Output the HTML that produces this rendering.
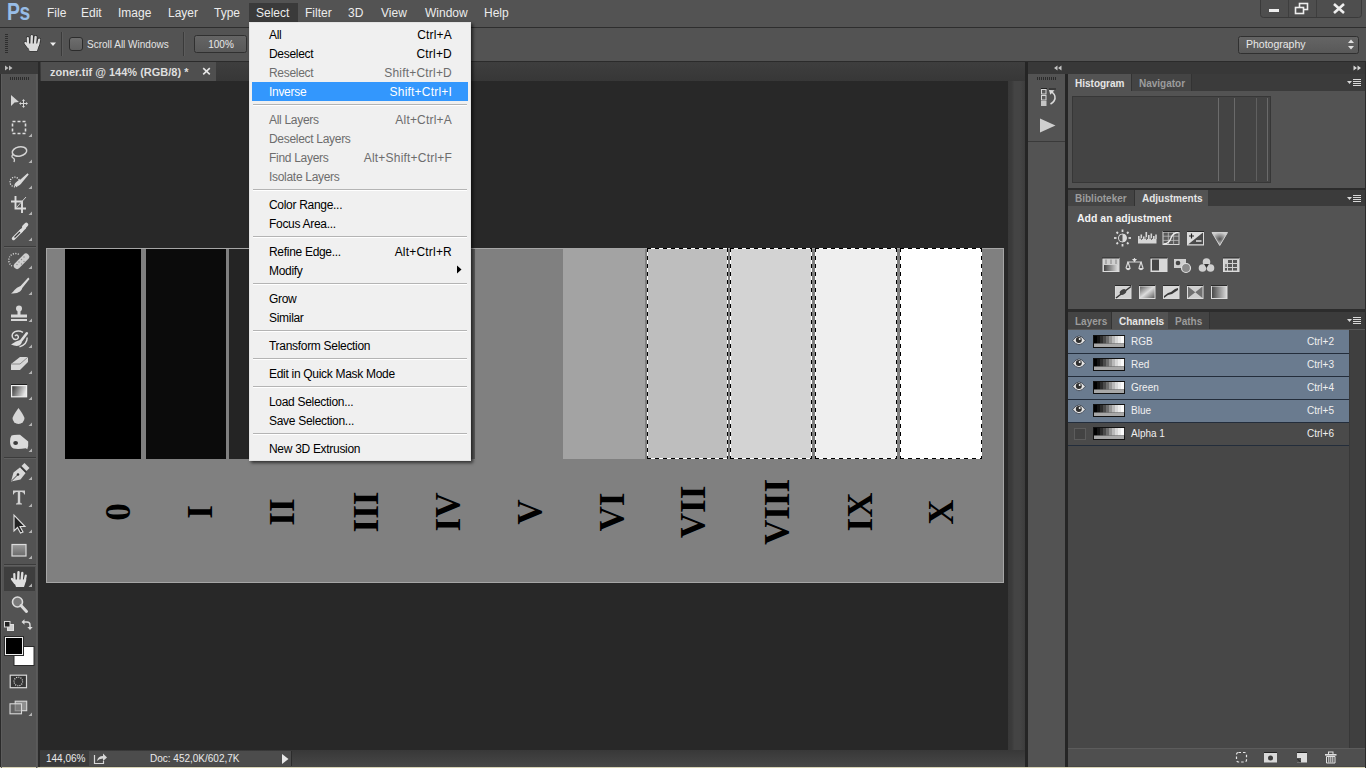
<!DOCTYPE html>
<html><head><meta charset="utf-8">
<style>
*{margin:0;padding:0;box-sizing:border-box}
html,body{width:1366px;height:768px;overflow:hidden;background:#535353;font-family:"Liberation Sans",sans-serif}
.a{position:absolute}
#menubar{left:0;top:0;width:1366px;height:27px;background:#535353}
.mi{position:absolute;top:6px;font-size:12px;color:#ececec;line-height:15px;white-space:nowrap;letter-spacing:0px}
#opt{left:0;top:27px;width:1366px;height:35px;background:#535353;border-top:1px solid #2e2e2e;border-bottom:1px solid #2b2b2b}
#tb{left:0;top:62px;width:38px;height:706px;background:#535353;border-left:1px solid #2a2a2a}
#tbhead{left:0;top:62px;width:38px;height:12px;background:#3a3a3a}
#tbsep{left:38px;top:62px;width:2px;height:706px;background:#2a2a2a}
#canvas{left:40px;top:62px;width:985px;height:706px;background:#282828}
#tabstrip{left:40px;top:62px;width:985px;height:19px;background:linear-gradient(#3e3e3e,#373737)}
#doctab{left:41px;top:62px;width:175px;height:19px;background:#4f4f4f}
#vscroll{left:1008px;top:81px;width:17px;height:669px;background:linear-gradient(90deg,#383838 0,#3b3b3b 22%,#444 38%,#444 72%,#3d3d3d 100%)}
#status{left:40px;top:750px;width:985px;height:17px;background:linear-gradient(#383838,#474747)}
#sep2{left:1025px;top:62px;width:3px;height:706px;background:#252525}
#icol{left:1028px;top:62px;width:37px;height:706px;background:#535353}
#sep3{left:1065px;top:62px;width:3px;height:706px;background:#252525}
#rp{left:1068px;top:62px;width:298px;height:706px;background:#474747}
#bottomline{left:0;top:767px;width:1366px;height:1px;background:#d9d4b6}
.t{position:absolute;white-space:nowrap}
/* document */
#doc{left:46px;top:248px;width:958px;height:335px;background:#808080;border:1px solid #a6a6a6}
.bar{position:absolute;top:0px;height:210px}
.ants{top:-1px;height:211px;background-image:linear-gradient(90deg,#000 50%,#fff 50%),linear-gradient(90deg,#000 50%,#fff 50%),linear-gradient(180deg,#000 50%,#fff 50%),linear-gradient(180deg,#000 50%,#fff 50%);background-size:8px 1px,8px 1px,1px 8px,1px 8px;background-position:0 0,0 100%,0 0,100% 0;background-repeat:repeat-x,repeat-x,repeat-y,repeat-y}
.num{position:absolute;font-family:"Liberation Serif",serif;font-weight:bold;font-size:35px;line-height:35px;color:#000;white-space:nowrap;transform:translate(-50%,-50%) rotate(-90deg)}
/* dropdown menu */
#menu{left:249px;top:22px;width:222px;height:439px;background:#f0f0f0;border:1px solid #e4e4e4;box-shadow:2px 2px 3px rgba(0,0,0,.6)}
.r{position:absolute;left:0;width:220px;height:19px;font-size:12px;line-height:19px;color:#000;letter-spacing:-0.3px}
.r .l{position:absolute;left:19px;top:1px}
.r .k{position:absolute;right:18px;top:1px;letter-spacing:0.2px}
.r.d{color:#6d6d6d}
.r.h{left:2px;width:216px;background:#3397fd;color:#fff}
.r.h .l{left:17px}.r.h .k{right:16px}
.sp{position:absolute;left:3px;width:214px;height:1px;background:#b4b4b4;border-bottom:1px solid #fff;box-sizing:content-box}
</style></head><body>
<div id="menubar" class="a"></div>
<div id="opt" class="a"></div>
<div id="tb" class="a"></div>
<div id="tbhead" class="a"></div>
<div id="tbsep" class="a"></div>
<div id="canvas" class="a"></div>
<div id="tabstrip" class="a"></div>
<div id="doctab" class="a"></div>
<div class="t" style="left:50px;top:66px;font-size:11px;font-weight:bold;color:#dedede;line-height:13px">zoner.tif @ 144% (RGB/8) *</div>
<svg class="a" style="left:200px;top:65px" width="12" height="12" viewBox="200 65 12 12"><path d="M203.2 68.2 L209.8 74.3 M209.8 68.2 L203.2 74.3" stroke="#e6e6e6" stroke-width="1.6"/></svg>
<div id="vscroll" class="a"></div>
<div id="status" class="a"></div>
<div id="sep2" class="a"></div>
<div id="icol" class="a"></div>
<div id="sep3" class="a"></div>
<div id="rp" class="a"></div>
<div id="bottomline" class="a"></div>


<!-- toolbar icons -->
<svg class="a" style="left:0;top:0" width="40" height="768" viewBox="0 0 40 768">
 <rect x="1" y="74" width="1" height="694" fill="#5c5c5c"/>
 <rect x="36" y="74" width="1.5" height="694" fill="#5b5b5b"/>
 <path d="M5 65.5 L8.5 68 L5 70.5Z M9 65.5 L12.5 68 L9 70.5Z" fill="#bdbdbd"/>
 <g fill="#2b2b2b"><rect x="10" y="77" width="1" height="3"/><rect x="12" y="77" width="1" height="3"/><rect x="14" y="77" width="1" height="3"/><rect x="16" y="77" width="1" height="3"/><rect x="18" y="77" width="1" height="3"/><rect x="20" y="77" width="1" height="3"/><rect x="22" y="77" width="1" height="3"/><rect x="24" y="77" width="1" height="3"/><rect x="26" y="77" width="1" height="3"/><rect x="28" y="77" width="1" height="3"/></g>
 <g fill="#3b3b3b"><rect x="4" y="246" width="32" height="1"/><rect x="4" y="457" width="32" height="1"/><rect x="4" y="564" width="32" height="1"/></g>
 <g fill="#5f5f5f"><rect x="4" y="247" width="32" height="1"/><rect x="4" y="458" width="32" height="1"/><rect x="4" y="565" width="32" height="1"/></g>
 <!-- selected hand bg -->
 <rect x="4" y="567" width="31" height="24" fill="#3e3e3e"/>
 <!-- flyout triangles -->
 <g fill="#b4b4b4">
  <path d="M28.5 137h3.5v-3.5z"/><path d="M28.5 163h3.5v-3.5z"/><path d="M28.5 189h3.5v-3.5z"/><path d="M28.5 215h3.5v-3.5z"/><path d="M28.5 241h3.5v-3.5z"/>
  <path d="M28.5 269h3.5v-3.5z"/><path d="M28.5 295h3.5v-3.5z"/><path d="M28.5 322h3.5v-3.5z"/><path d="M28.5 348h3.5v-3.5z"/><path d="M28.5 374h3.5v-3.5z"/><path d="M28.5 400h3.5v-3.5z"/><path d="M28.5 426h3.5v-3.5z"/><path d="M28.5 452h3.5v-3.5z"/>
  <path d="M28.5 480h3.5v-3.5z"/><path d="M28.5 507h3.5v-3.5z"/><path d="M28.5 533h3.5v-3.5z"/><path d="M28.5 559h3.5v-3.5z"/><path d="M28.5 587h3.5v-3.5z"/><path d="M28.5 716h3.5v-3.5z"/>
 </g>
 <g fill="#d6d6d6" stroke="none">
  <!-- move -->
  <path d="M11 95 L19 102 L14.5 102.5 L11 106 Z"/>
  <path d="M23.5 99 L25 101 H24 V103 H26 V102 L28 103.5 L26 105 V104 H24 V106 H25 L23.5 108 L22 106 H23 V104 H21 V105 L19 103.5 L21 102 V103 H23 V101 H22 Z"/>
 </g>
 <!-- marquee -->
 <rect x="12.5" y="121.5" width="13" height="12" fill="none" stroke="#dedede" stroke-width="1.6" stroke-dasharray="3 2"/>
 <!-- lasso -->
 <ellipse cx="19.5" cy="151.5" rx="7.3" ry="4.6" fill="none" stroke="#d4d4d4" stroke-width="1.5" transform="rotate(-12 19.5 151.5)"/>
 <path d="M13.5 154 Q11 156 12.5 157.5 Q14.5 158.5 14.5 160 L14 162" fill="none" stroke="#d4d4d4" stroke-width="1.3"/>
 <!-- quick select -->
 <circle cx="14.8" cy="182" r="4.8" fill="none" stroke="#e8e8e8" stroke-width="1.3" stroke-dasharray="1.1 1.3"/>
 <path d="M27.5 173.3 L20.5 179.5 Q15.5 181.5 14.3 185 Q14 186.5 16 186.2 Q20.5 185.5 22 182.5 L28.7 174.6Z" fill="#dadada"/>
 <!-- crop -->
 <path d="M15.5 196 V208.5 H26 M11 201.5 H22 V213" fill="none" stroke="#dcdcdc" stroke-width="1.9"/>
 <path d="M16.5 207.5 L26 197" stroke="#cfcfcf" stroke-width="1"/>
 <!-- eyedropper -->
 <path d="M13.5 238.5 L21.5 230.5" stroke="#dcdcdc" stroke-width="3.4" stroke-linecap="round"/>
 <path d="M14.5 237.5 L21 231" stroke="#3a3a3a" stroke-width="1.2"/>
 <rect x="19" y="228" width="7" height="3.2" fill="#dedede" transform="rotate(-45 22.5 229.6)"/>
 <path d="M24 227 L26.3 224.7" stroke="#dcdcdc" stroke-width="4" stroke-linecap="round"/>
 <!-- healing -->
 <path d="M12 266 A6.5 6.5 0 0 1 19 254.5" fill="none" stroke="#e6e6e6" stroke-width="1.3" stroke-dasharray="1 1.4"/>
 <rect x="12" y="258" width="19" height="6.5" rx="3.2" fill="#cfcfcf" transform="rotate(-45 21.5 261.25)"/>
 <g fill="#8a8a8a"><circle cx="19" cy="262" r=".7"/><circle cx="21.5" cy="259.5" r=".7"/><circle cx="24" cy="257" r=".7"/><circle cx="17" cy="264.5" r=".7"/><circle cx="21.5" cy="264" r=".7"/><circle cx="24" cy="261.5" r=".7"/></g>
 <!-- brush -->
 <path d="M28.3 277.5 L20.5 286 Q16.5 287.5 14.5 290 Q13 292 11 293.5 Q17 294 20 291.5 Q22 289.5 22.3 288 L29.5 279Z" fill="#dadada"/>
 <!-- stamp -->
 <circle cx="19" cy="308.5" r="3" fill="#d8d8d8"/><rect x="17.5" y="310" width="3" height="5" fill="#d8d8d8"/><rect x="11" y="314.5" width="16" height="3" fill="#d8d8d8"/><rect x="11" y="319" width="16" height="2" fill="#d8d8d8"/>
 <!-- history brush -->
 <path d="M23 332.3 Q19 330.2 15 331.6 Q11.3 333.6 12.4 337.2 Q13.8 340.2 17 339.2 Q19.3 337.8 17.8 335.6 Q16.3 334.3 15 336" fill="none" stroke="#dedede" stroke-width="1.4"/>
 <path d="M26.8 333.3 L21.3 340.5" stroke="#dedede" stroke-width="2.6" stroke-linecap="round"/>
 <path d="M20.8 339.8 Q16 341 11 344.6 Q15.5 346.6 19.3 345.6 Q21.3 344.2 22 342Z" fill="#dedede"/>
 <path d="M27.2 337.5 Q27.2 344.5 19.5 346.8" fill="none" stroke="#dedede" stroke-width="1.4"/>
 <!-- eraser -->
 <path d="M11 364 L20 357 H28 V362 L20 370 H11Z" fill="#d8d8d8"/><path d="M11 364 H20 L28 357" stroke="#7a7a7a" stroke-width=".8" fill="none"/>
 <!-- gradient -->
 <defs><linearGradient id="gr" x1="0" y1="0" x2="1" y2="1"><stop offset="0" stop-color="#3a3a3a"/><stop offset="1" stop-color="#e8e8e8"/></linearGradient>
 <linearGradient id="gr2" x1="0" y1="0" x2="0" y2="1"><stop offset="0" stop-color="#9a9a9a"/><stop offset="1" stop-color="#6a6a6a"/></linearGradient></defs>
 <linearGradient id="gr3" x1="0" y1="0" x2="1" y2="0.3"><stop offset="0" stop-color="#2e2e2e"/><stop offset="1" stop-color="#e6e6e6"/></linearGradient>
 <rect x="11.6" y="385.6" width="15" height="11.2" fill="url(#gr3)" stroke="#f0f0f0" stroke-width="1.2"/><rect x="11" y="384" width="16" height="1" fill="#1e1e1e"/>
 <!-- blur -->
 <path d="M18.5 408 Q14 414 12.5 418 A6 6 0 0 0 24.5 418 Q23 414 18.5 408Z" fill="#d6d6d6"/>
 <!-- dodge/smudge -->
 <path d="M11.5 435.5 Q13.5 434.6 20 434.8 L28.2 441.5 Q28.6 446 27.3 449.3 L25.8 448.3 Q18 449.6 13.5 448.6 Q10 446.8 10 441.5 Q10 437.5 11.5 435.5Z" fill="#dadada"/>
 <ellipse cx="15.6" cy="443" rx="2.4" ry="2" fill="#3c3c3c"/>
 <!-- pen -->
 <path d="M11 481.5 L13.5 472.5 L20.5 467 L26 472.5 L20.5 479.5 Z" fill="#d8d8d8"/>
 <path d="M21.5 466 L24.5 463 L29.5 468 L26.5 471Z" fill="#d8d8d8"/>
 <path d="M20.5 467 L26 472.5" stroke="#333" stroke-width="1.1"/>
 <path d="M11.5 481 L17.5 475" stroke="#444" stroke-width="1"/><circle cx="18" cy="474.5" r="1.3" fill="#333"/>
 <!-- type -->
 <path d="M13 490.5 H25 V494.5 H24.3 Q24 492 21.5 492 H20.2 V502.2 Q20.2 503.6 22 503.6 V504.5 H16 V503.6 Q17.8 503.6 17.8 502.2 V492 H16.5 Q14 492 13.7 494.5 H13Z" fill="#d2d2d2"/>
 <!-- path select -->
 <path d="M14 515 V531 L17.5 527.5 L20.5 533 L23 532 L20 526.5 H25 Z" fill="#222" stroke="#e0e0e0" stroke-width="1.1"/>
 <!-- rect -->
 <rect x="12" y="544.5" width="14" height="11.5" fill="url(#gr2)" stroke="#dcdcdc" stroke-width="1.2"/>
 <!-- hand -->
 <g stroke="#dedede" stroke-linecap="round"><line x1="14.5" y1="580" x2="14.3" y2="574" stroke-width="2.2"/><line x1="18.2" y1="580" x2="18.5" y2="572.3" stroke-width="2.4"/><line x1="21.7" y1="580" x2="22.3" y2="573" stroke-width="2.4"/><line x1="24.6" y1="581" x2="25.8" y2="575.5" stroke-width="2.2"/><line x1="15" y1="583" x2="12" y2="579" stroke-width="2.3"/></g>
 <path d="M13.5 579.5 H26.5 L24 587 H16Z" fill="#dedede"/>
 <!-- zoom -->
 <circle cx="17.5" cy="602" r="5" fill="#7a7a7a" stroke="#dcdcdc" stroke-width="1.6"/><path d="M21 605.5 L26.5 611.5" stroke="#dcdcdc" stroke-width="3" stroke-linecap="round"/>
 <!-- default colors -->
 <rect x="7.5" y="624.5" width="6" height="6" fill="#cfcfcf" stroke="#e0e0e0" stroke-width="1"/><rect x="4.5" y="621.5" width="5.5" height="5.5" fill="#222" stroke="#d8d8d8" stroke-width="1"/>
 <!-- swap -->
 <path d="M23.5 622 H27 Q30 622 30 625 V628" fill="none" stroke="#dcdcdc" stroke-width="1.4"/><path d="M21.5 622 L24.5 619.3 V624.7Z M27.3 627 H32.7 L30 630Z" fill="#dcdcdc"/>
 <!-- fg bg -->
 <rect x="14" y="646.5" width="20" height="19" fill="#fff" stroke="#2a2a2a" stroke-width="1"/>
 <rect x="4.5" y="636.5" width="19" height="19" fill="#000" stroke="#2a2a2a" stroke-width="1"/>
 <rect x="5.5" y="637.5" width="17" height="17" fill="#000" stroke="#f0f0f0" stroke-width="1"/>
 <!-- quick mask -->
 <rect x="10.2" y="675.2" width="16.3" height="12.5" fill="#353535" stroke="#d8d8d8" stroke-width="1.2"/><circle cx="18.3" cy="681.5" r="4.3" fill="none" stroke="#f0f0f0" stroke-width="1.1" stroke-dasharray="1 1.2"/>
 <!-- screen mode -->
 <rect x="15.2" y="701.2" width="11.5" height="9.5" fill="#8e8e8e" stroke="#d8d8d8" stroke-width="1.1"/>
 <rect x="10" y="703.8" width="11.5" height="10" fill="#6e6e6e" fill-opacity=".6" stroke="#d8d8d8" stroke-width="1.1"/>
</svg>


<!-- options bar -->
<svg class="a" style="left:0;top:27px" width="1366" height="35" viewBox="0 27 1366 35">
 <g fill="#2e2e2e"><rect x="5" y="34" width="3" height="1"/><rect x="5" y="36" width="3" height="1"/><rect x="5" y="38" width="3" height="1"/><rect x="5" y="40" width="3" height="1"/><rect x="5" y="42" width="3" height="1"/><rect x="5" y="44" width="3" height="1"/><rect x="5" y="46" width="3" height="1"/><rect x="5" y="48" width="3" height="1"/><rect x="5" y="50" width="3" height="1"/><rect x="5" y="52" width="3" height="1"/></g>
 <!-- hand -->
 <g stroke="#2a2a2a" stroke-linecap="round"><line x1="28" y1="44" x2="27.8" y2="38" stroke-width="3.6"/><line x1="31.5" y1="44" x2="31.8" y2="36.3" stroke-width="3.8"/><line x1="35" y1="44" x2="35.6" y2="37" stroke-width="3.8"/><line x1="38" y1="45" x2="39.2" y2="39.5" stroke-width="3.6"/><line x1="28.5" y1="47" x2="25.5" y2="43" stroke-width="3.7"/></g>
 <path d="M27 43 H40 L37.5 51.5 H29.5Z" fill="#2a2a2a"/>
 <g stroke="#dcdcdc" stroke-linecap="round"><line x1="28" y1="44" x2="27.8" y2="38" stroke-width="2.2"/><line x1="31.5" y1="44" x2="31.8" y2="36.3" stroke-width="2.4"/><line x1="35" y1="44" x2="35.6" y2="37" stroke-width="2.4"/><line x1="38" y1="45" x2="39.2" y2="39.5" stroke-width="2.2"/><line x1="28.5" y1="47" x2="25.5" y2="43" stroke-width="2.3"/></g>
 <path d="M27 43.5 H39.5 L37 51 H29.5Z" fill="#dcdcdc"/>
 <path d="M50 42.5 H56 L53 46Z" fill="#f0f0f0"/>
 <rect x="61" y="32" width="1" height="24" fill="#3a3a3a"/><rect x="62" y="32" width="1" height="24" fill="#5c5c5c"/>
 <defs><linearGradient id="cb" x1="0" y1="0" x2="0" y2="1"><stop offset="0" stop-color="#6e6e6e"/><stop offset="1" stop-color="#5e5e5e"/></linearGradient>
 <linearGradient id="btn" x1="0" y1="0" x2="0" y2="1"><stop offset="0" stop-color="#656565"/><stop offset="1" stop-color="#585858"/></linearGradient></defs>
 <rect x="69.5" y="37.5" width="13" height="13" rx="2.5" fill="url(#cb)" stroke="#2c2c2c"/>
 <rect x="183" y="32" width="1" height="24" fill="#3a3a3a"/><rect x="184" y="32" width="1" height="24" fill="#5c5c5c"/>
 <rect x="194.5" y="35.5" width="52" height="17" rx="2" fill="url(#btn)" stroke="#303030"/>
 <rect x="1238.5" y="36.5" width="120" height="17" rx="2" fill="url(#btn)" stroke="#303030"/>
 <path d="M1348 43 L1351 39.5 L1354 43Z M1348 46 L1351 49.5 L1354 46Z" fill="#e0e0e0"/>
</svg>
<div class="t" style="left:87px;top:39px;font-size:10px;line-height:12px;color:#e4e4e4">Scroll All Windows</div>
<div class="t" style="left:195px;top:39px;width:52px;text-align:center;font-size:10px;line-height:12px;color:#e8e8e8">100%</div>
<div class="t" style="left:1246px;top:38px;font-size:10.5px;line-height:13px;color:#e8e8e8">Photography</div>
<!-- window buttons -->
<svg class="a" style="left:1258px;top:0" width="108" height="20" viewBox="1258 0 108 20">
 <path d="M1260.5 0 V14.5 Q1260.5 17.5 1263.5 17.5 H1358.5 Q1361.5 17.5 1361.5 14.5 V0" fill="#4e4e4e" stroke="#3a3a3a"/>
 <rect x="1288" y="0" width="1" height="17" fill="#3e3e3e"/><rect x="1316" y="0" width="1" height="17" fill="#3e3e3e"/>
 <rect x="1269" y="9" width="10" height="3" fill="#eeeeee"/>
 <rect x="1299.5" y="3.5" width="8" height="6" fill="none" stroke="#eee" stroke-width="1.6"/><rect x="1295.5" y="7.5" width="8" height="6" fill="#4e4e4e" stroke="#eee" stroke-width="1.6"/>
 <path d="M1334 4 L1344 13 M1344 4 L1334 13" stroke="#eee" stroke-width="2.6"/>
</svg>
<!-- Ps logo -->
<div class="t" style="left:7px;top:1px;font-size:23px;line-height:23px;font-weight:bold;color:#98bde6;letter-spacing:-0.5px;transform:scaleX(0.84);transform-origin:0 0">Ps</div>


<!-- right side -->
<div class="a" style="left:1028px;top:62px;width:338px;height:12px;background:#383838"></div>
<div class="a" style="left:1365px;top:62px;width:1px;height:706px;background:#2c2c2c"></div>
<svg class="a" style="left:1028px;top:62px" width="37" height="706" viewBox="1028 62 37 706">
 <path d="M1057.5 65.5 L1054 68 L1057.5 70.5Z M1061.5 65.5 L1058 68 L1061.5 70.5Z" fill="#c4c4c4"/>
 <g fill="#2b2b2b"><rect x="1037" y="77" width="1" height="3"/><rect x="1039" y="77" width="1" height="3"/><rect x="1041" y="77" width="1" height="3"/><rect x="1043" y="77" width="1" height="3"/><rect x="1045" y="77" width="1" height="3"/><rect x="1047" y="77" width="1" height="3"/><rect x="1049" y="77" width="1" height="3"/><rect x="1051" y="77" width="1" height="3"/><rect x="1053" y="77" width="1" height="3"/><rect x="1055" y="77" width="1" height="3"/></g>
 <rect x="1041" y="88" width="6" height="1" fill="#222"/>
 <rect x="1041.5" y="89.5" width="4.5" height="4.5" fill="#5a5a5a" stroke="#d8d8d8"/>
 <rect x="1041.5" y="95.5" width="4.5" height="4.5" fill="#5a5a5a" stroke="#d8d8d8"/>
 <rect x="1041" y="101" width="5.5" height="5" fill="#c4c4c4"/>
 <rect x="1049" y="88.5" width="7" height="1" fill="#222"/>
 <path d="M1049 90 L1054.5 90.3 L1050.3 94.8Z" fill="#dadada"/>
 <path d="M1052 92 Q1057 96.5 1054 101 Q1052.8 102.8 1050.5 104" fill="none" stroke="#dadada" stroke-width="1.6"/>
 <path d="M1040 118.5 L1055.5 125.5 L1040 132.5Z" fill="#cfcfcf"/>
 <rect x="1028" y="141" width="37" height="1" fill="#3a3a3a"/>
</svg>
<!-- panel 1 -->
<div class="a" style="left:1068px;top:74px;width:297px;height:17px;background:#3b3b3b"></div>
<div class="a" style="left:1068px;top:74px;width:63px;height:17px;background:#535353"></div>
<div class="a" style="left:1131px;top:74px;width:61px;height:17px;background:#444444;border-left:1px solid #333;border-right:1px solid #333"></div>
<div class="t" style="left:1075px;top:78px;font-size:10px;font-weight:bold;line-height:12px;color:#e6e6e6">Histogram</div>
<div class="t" style="left:1139px;top:78px;font-size:10px;font-weight:bold;line-height:12px;color:#9c9c9c">Navigator</div>
<div class="a" style="left:1068px;top:91px;width:297px;height:97px;background:#535353"></div>
<div class="a" style="left:1072px;top:96px;width:199px;height:87px;background:#444444;border:1px solid #373737"></div>
<div class="a" style="left:1218px;top:98px;width:1px;height:83px;background:#6c6c6c"></div>
<div class="a" style="left:1234px;top:98px;width:1px;height:83px;background:#6a6a6a"></div>
<div class="a" style="left:1256px;top:98px;width:1px;height:83px;background:#606060"></div>
<div class="a" style="left:1267px;top:98px;width:1px;height:83px;background:#6a6a6a"></div>
<div class="a" style="left:1068px;top:188px;width:297px;height:2px;background:#2c2c2c"></div>
<!-- panel 2 -->
<div class="a" style="left:1068px;top:190px;width:297px;height:16px;background:#3b3b3b"></div>
<div class="a" style="left:1068px;top:190px;width:67px;height:16px;background:#444444;border-right:1px solid #333"></div>
<div class="a" style="left:1135px;top:190px;width:73px;height:16px;background:#535353"></div>
<div class="t" style="left:1075px;top:193px;font-size:10px;font-weight:bold;line-height:12px;color:#9c9c9c">Biblioteker</div>
<div class="t" style="left:1142px;top:193px;font-size:10px;font-weight:bold;line-height:12px;color:#e6e6e6">Adjustments</div>
<div class="a" style="left:1068px;top:206px;width:297px;height:103px;background:#535353"></div>
<div class="t" style="left:1077px;top:212px;font-size:10.5px;font-weight:bold;line-height:12px;color:#f2f2f2">Add an adjustment</div>
<div class="a" style="left:1068px;top:309px;width:297px;height:3px;background:#2c2c2c"></div>
<!-- panel 3 -->
<div class="a" style="left:1068px;top:312px;width:297px;height:17px;background:#3b3b3b"></div>
<div class="a" style="left:1068px;top:312px;width:44px;height:17px;background:#444444;border-right:1px solid #333"></div>
<div class="a" style="left:1112px;top:312px;width:56px;height:17px;background:#535353"></div>
<div class="a" style="left:1168px;top:312px;width:42px;height:17px;background:#444444;border-right:1px solid #333"></div>
<div class="t" style="left:1075px;top:316px;font-size:10px;font-weight:bold;line-height:12px;color:#9c9c9c">Layers</div>
<div class="t" style="left:1119px;top:316px;font-size:10px;font-weight:bold;line-height:12px;color:#e6e6e6">Channels</div>
<div class="t" style="left:1175px;top:316px;font-size:10px;font-weight:bold;line-height:12px;color:#9c9c9c">Paths</div>
<div class="a" style="left:1068px;top:329px;width:297px;height:1px;background:#585858"></div>
<div class="a" style="left:1349px;top:330px;width:16px;height:418px;background:#3f3f3f;border-left:1px solid #383838"></div>
<div class="a" style="left:1068px;top:748px;width:297px;height:18px;background:#4f4f4f;border-top:1px solid #5c5c5c"></div>
<!-- menu icons -->
<svg class="a" style="left:1340px;top:62px" width="25" height="270" viewBox="1340 62 25 270">
 <g fill="#d8d8d8">
  <path d="M1347 81 H1352 L1349.5 84Z"/><rect x="1353" y="79" width="8" height="1"/><rect x="1353" y="81" width="8" height="1"/><rect x="1353" y="83" width="8" height="1"/><rect x="1353" y="85" width="8" height="1"/>
  <path d="M1347 197 H1352 L1349.5 200Z"/><rect x="1353" y="195" width="8" height="1"/><rect x="1353" y="197" width="8" height="1"/><rect x="1353" y="199" width="8" height="1"/><rect x="1353" y="201" width="8" height="1"/>
  <path d="M1347 319 H1352 L1349.5 322Z"/><rect x="1353" y="317" width="8" height="1"/><rect x="1353" y="319" width="8" height="1"/><rect x="1353" y="321" width="8" height="1"/><rect x="1353" y="323" width="8" height="1"/>
  <path d="M1353.5 65.5 L1357 68 L1353.5 70.5Z M1357.5 65.5 L1361 68 L1357.5 70.5Z"/>
 </g>
</svg>

<!-- channel rows -->
<div class="a" style="left:1068px;top:330px;width:281px;height:1px;background:#6a7b8f"></div>
<div class="a" style="left:1068px;top:331px;width:281px;height:22px;background:#6a7b8f"><svg width="14" height="11" viewBox="0 0 14 11" style="position:absolute;left:4px;top:4px"><path d="M0.8 5.5 Q7 -3.6 13.2 5.5 Q7 14 0.8 5.5Z" fill="#e8e8e8" stroke="#3c4450" stroke-width=".9"/><circle cx="6.8" cy="5" r="3" fill="#2e2e2e"/><circle cx="7.7" cy="3.9" r="1" fill="#f4f4f4"/></svg><svg width="32" height="13" viewBox="0 0 32 13" style="position:absolute;left:25px;top:4px"><rect x="0" y="0" width="32" height="13" fill="#111"/><rect x="1.0" y="1" width="3.1" height="7.5" fill="#000000"/><rect x="4.0" y="1" width="3.1" height="7.5" fill="#141414"/><rect x="7.0" y="1" width="3.1" height="7.5" fill="#2d2d2d"/><rect x="10.0" y="1" width="3.1" height="7.5" fill="#4b4b4b"/><rect x="13.0" y="1" width="3.1" height="7.5" fill="#6e6e6e"/><rect x="16.0" y="1" width="3.1" height="7.5" fill="#969696"/><rect x="19.0" y="1" width="3.1" height="7.5" fill="#b9b9b9"/><rect x="22.0" y="1" width="3.1" height="7.5" fill="#d7d7d7"/><rect x="25.0" y="1" width="3.1" height="7.5" fill="#ebebeb"/><rect x="28.0" y="1" width="3.1" height="7.5" fill="#fafafa"/><rect x="1" y="8.5" width="30" height="3.5" fill="#a8a8a8"/></svg><div class="t" style="left:63px;top:5px;font-size:10px;line-height:12px;color:#f0f0f0">RGB</div><div class="t" style="left:239px;top:5px;font-size:10px;line-height:12px;color:#f0f0f0">Ctrl+2</div></div>
<div class="a" style="left:1068px;top:353px;width:281px;height:1px;background:#232d3b"></div>
<div class="a" style="left:1068px;top:354px;width:281px;height:22px;background:#6a7b8f"><svg width="14" height="11" viewBox="0 0 14 11" style="position:absolute;left:4px;top:4px"><path d="M0.8 5.5 Q7 -3.6 13.2 5.5 Q7 14 0.8 5.5Z" fill="#e8e8e8" stroke="#3c4450" stroke-width=".9"/><circle cx="6.8" cy="5" r="3" fill="#2e2e2e"/><circle cx="7.7" cy="3.9" r="1" fill="#f4f4f4"/></svg><svg width="32" height="13" viewBox="0 0 32 13" style="position:absolute;left:25px;top:4px"><rect x="0" y="0" width="32" height="13" fill="#111"/><rect x="1.0" y="1" width="3.1" height="7.5" fill="#000000"/><rect x="4.0" y="1" width="3.1" height="7.5" fill="#141414"/><rect x="7.0" y="1" width="3.1" height="7.5" fill="#2d2d2d"/><rect x="10.0" y="1" width="3.1" height="7.5" fill="#4b4b4b"/><rect x="13.0" y="1" width="3.1" height="7.5" fill="#6e6e6e"/><rect x="16.0" y="1" width="3.1" height="7.5" fill="#969696"/><rect x="19.0" y="1" width="3.1" height="7.5" fill="#b9b9b9"/><rect x="22.0" y="1" width="3.1" height="7.5" fill="#d7d7d7"/><rect x="25.0" y="1" width="3.1" height="7.5" fill="#ebebeb"/><rect x="28.0" y="1" width="3.1" height="7.5" fill="#fafafa"/><rect x="1" y="8.5" width="30" height="3.5" fill="#a8a8a8"/></svg><div class="t" style="left:63px;top:5px;font-size:10px;line-height:12px;color:#f0f0f0">Red</div><div class="t" style="left:239px;top:5px;font-size:10px;line-height:12px;color:#f0f0f0">Ctrl+3</div></div>
<div class="a" style="left:1068px;top:376px;width:281px;height:1px;background:#232d3b"></div>
<div class="a" style="left:1068px;top:377px;width:281px;height:22px;background:#6a7b8f"><svg width="14" height="11" viewBox="0 0 14 11" style="position:absolute;left:4px;top:4px"><path d="M0.8 5.5 Q7 -3.6 13.2 5.5 Q7 14 0.8 5.5Z" fill="#e8e8e8" stroke="#3c4450" stroke-width=".9"/><circle cx="6.8" cy="5" r="3" fill="#2e2e2e"/><circle cx="7.7" cy="3.9" r="1" fill="#f4f4f4"/></svg><svg width="32" height="13" viewBox="0 0 32 13" style="position:absolute;left:25px;top:4px"><rect x="0" y="0" width="32" height="13" fill="#111"/><rect x="1.0" y="1" width="3.1" height="7.5" fill="#000000"/><rect x="4.0" y="1" width="3.1" height="7.5" fill="#141414"/><rect x="7.0" y="1" width="3.1" height="7.5" fill="#2d2d2d"/><rect x="10.0" y="1" width="3.1" height="7.5" fill="#4b4b4b"/><rect x="13.0" y="1" width="3.1" height="7.5" fill="#6e6e6e"/><rect x="16.0" y="1" width="3.1" height="7.5" fill="#969696"/><rect x="19.0" y="1" width="3.1" height="7.5" fill="#b9b9b9"/><rect x="22.0" y="1" width="3.1" height="7.5" fill="#d7d7d7"/><rect x="25.0" y="1" width="3.1" height="7.5" fill="#ebebeb"/><rect x="28.0" y="1" width="3.1" height="7.5" fill="#fafafa"/><rect x="1" y="8.5" width="30" height="3.5" fill="#a8a8a8"/></svg><div class="t" style="left:63px;top:5px;font-size:10px;line-height:12px;color:#f0f0f0">Green</div><div class="t" style="left:239px;top:5px;font-size:10px;line-height:12px;color:#f0f0f0">Ctrl+4</div></div>
<div class="a" style="left:1068px;top:399px;width:281px;height:1px;background:#232d3b"></div>
<div class="a" style="left:1068px;top:400px;width:281px;height:22px;background:#6a7b8f"><svg width="14" height="11" viewBox="0 0 14 11" style="position:absolute;left:4px;top:4px"><path d="M0.8 5.5 Q7 -3.6 13.2 5.5 Q7 14 0.8 5.5Z" fill="#e8e8e8" stroke="#3c4450" stroke-width=".9"/><circle cx="6.8" cy="5" r="3" fill="#2e2e2e"/><circle cx="7.7" cy="3.9" r="1" fill="#f4f4f4"/></svg><svg width="32" height="13" viewBox="0 0 32 13" style="position:absolute;left:25px;top:4px"><rect x="0" y="0" width="32" height="13" fill="#111"/><rect x="1.0" y="1" width="3.1" height="7.5" fill="#000000"/><rect x="4.0" y="1" width="3.1" height="7.5" fill="#141414"/><rect x="7.0" y="1" width="3.1" height="7.5" fill="#2d2d2d"/><rect x="10.0" y="1" width="3.1" height="7.5" fill="#4b4b4b"/><rect x="13.0" y="1" width="3.1" height="7.5" fill="#6e6e6e"/><rect x="16.0" y="1" width="3.1" height="7.5" fill="#969696"/><rect x="19.0" y="1" width="3.1" height="7.5" fill="#b9b9b9"/><rect x="22.0" y="1" width="3.1" height="7.5" fill="#d7d7d7"/><rect x="25.0" y="1" width="3.1" height="7.5" fill="#ebebeb"/><rect x="28.0" y="1" width="3.1" height="7.5" fill="#fafafa"/><rect x="1" y="8.5" width="30" height="3.5" fill="#a8a8a8"/></svg><div class="t" style="left:63px;top:5px;font-size:10px;line-height:12px;color:#f0f0f0">Blue</div><div class="t" style="left:239px;top:5px;font-size:10px;line-height:12px;color:#f0f0f0">Ctrl+5</div></div>
<div class="a" style="left:1068px;top:422px;width:281px;height:1px;background:#232d3b"></div>
<div class="a" style="left:1068px;top:423px;width:281px;height:22px;background:#4a4a4a"><div style="position:absolute;left:6px;top:5px;width:12px;height:12px;background:#434343;border:1px solid #5c5c5c"></div><svg width="32" height="13" viewBox="0 0 32 13" style="position:absolute;left:25px;top:4px"><rect x="0" y="0" width="32" height="13" fill="#111"/><rect x="1.0" y="1" width="3.1" height="7.5" fill="#000000"/><rect x="4.0" y="1" width="3.1" height="7.5" fill="#141414"/><rect x="7.0" y="1" width="3.1" height="7.5" fill="#2d2d2d"/><rect x="10.0" y="1" width="3.1" height="7.5" fill="#4b4b4b"/><rect x="13.0" y="1" width="3.1" height="7.5" fill="#6e6e6e"/><rect x="16.0" y="1" width="3.1" height="7.5" fill="#969696"/><rect x="19.0" y="1" width="3.1" height="7.5" fill="#b9b9b9"/><rect x="22.0" y="1" width="3.1" height="7.5" fill="#d7d7d7"/><rect x="25.0" y="1" width="3.1" height="7.5" fill="#ebebeb"/><rect x="28.0" y="1" width="3.1" height="7.5" fill="#fafafa"/><rect x="1" y="8.5" width="30" height="3.5" fill="#a8a8a8"/></svg><div class="t" style="left:63px;top:5px;font-size:10px;line-height:12px;color:#f0f0f0">Alpha 1</div><div class="t" style="left:239px;top:5px;font-size:10px;line-height:12px;color:#f0f0f0">Ctrl+6</div></div>
<div class="a" style="left:1068px;top:445px;width:281px;height:1px;background:#232d3b"></div>

<!-- adjustment icons -->
<svg class="a" style="left:1100px;top:226px" width="145" height="78" viewBox="1100 226 145 78">
 <defs>
  <linearGradient id="ag1" x1="0" y1="0" x2="1" y2="0"><stop offset="0" stop-color="#444"/><stop offset="1" stop-color="#ddd"/></linearGradient>
  <linearGradient id="ag2" x1="0" y1="0" x2="1" y2="1"><stop offset="0" stop-color="#555"/><stop offset=".5" stop-color="#ddd"/><stop offset="1" stop-color="#555"/></linearGradient>
  <radialGradient id="ag3"><stop offset="0" stop-color="#555"/><stop offset="1" stop-color="#ccc"/></radialGradient>
 </defs>
 <!-- sun -->
 <g stroke="#dcdcdc" stroke-width="1.8"><line x1="1122.5" y1="229.5" x2="1122.5" y2="232"/><line x1="1122.5" y1="244" x2="1122.5" y2="246.5"/><line x1="1114" y1="238" x2="1116.5" y2="238"/><line x1="1128.5" y1="238" x2="1131" y2="238"/><line x1="1116.5" y1="232" x2="1118" y2="233.5"/><line x1="1127" y1="242.5" x2="1128.5" y2="244"/><line x1="1116.5" y1="244" x2="1118" y2="242.5"/><line x1="1127" y1="233.5" x2="1128.5" y2="232"/></g>
 <circle cx="1122.5" cy="238" r="4" fill="#dcdcdc" stroke="#dcdcdc" stroke-width="1"/><path d="M1122.5 234.5 A3.5 3.5 0 0 0 1122.5 241.5Z" fill="#555"/>
 <!-- levels -->
 <rect x="1138" y="239" width="18.5" height="4.5" fill="#d6d6d6"/>
 <g fill="#d6d6d6"><rect x="1138" y="236" width="1.6" height="3"/><rect x="1140.5" y="234.5" width="1.6" height="4.5"/><rect x="1143" y="236.5" width="1.6" height="2.5"/><rect x="1145.5" y="232" width="1.6" height="7"/><rect x="1148" y="235" width="1.6" height="4"/><rect x="1150.5" y="233.5" width="1.6" height="5.5"/><rect x="1153" y="236" width="1.6" height="3"/><rect x="1155.2" y="234.5" width="1.6" height="4.5"/></g>
 <g fill="#5a5a5a"><rect x="1141" y="238" width=".8" height="2"/><rect x="1146" y="237" width=".8" height="3"/><rect x="1151" y="238" width=".8" height="2"/></g>
 <!-- curves -->
 <rect x="1163" y="232" width="16" height="12.5" fill="#5a5a5a" stroke="#d8d8d8" stroke-width="1"/>
 <path d="M1168.3 232 V244.5 M1173.6 232 V244.5 M1163 236.2 H1179 M1163 240.4 H1179" stroke="#bdbdbd" stroke-width=".8"/>
 <path d="M1163.5 244 Q1169 244 1171 238 Q1173 232.5 1178.5 232.5" fill="none" stroke="#eee" stroke-width="1.3"/>
 <!-- exposure -->
 <path d="M1187.5 232 H1203.5 V245 H1187.5Z" fill="#dcdcdc"/><path d="M1203 232.5 L1188 244.5 H1203Z" fill="#4a4a4a"/><rect x="1187.5" y="232" width="16" height="13" fill="none" stroke="#dcdcdc" stroke-width="1"/>
 <path d="M1189 236 H1194 M1191.5 233.5 V238.5" stroke="#222" stroke-width="1.2"/><path d="M1196 241 H1201.5" stroke="#eee" stroke-width="1.4"/>
 <!-- vibrance -->
 <path d="M1212 232.5 H1227.5 L1219.75 245.5Z" fill="url(#ag3)" stroke="#d0d0d0" stroke-width="1"/>
 <!-- row 2 -->
 <rect x="1103" y="258.5" width="16" height="13" fill="#cfcfcf" stroke="#dcdcdc" stroke-width="1"/><rect x="1104" y="265" width="14" height="6" fill="url(#ag1)"/><path d="M1106 259.5 V264 M1111 259.5 V264 M1116 259.5 V264" stroke="#999" stroke-width="1.4"/>
 <g fill="none" stroke="#d8d8d8" stroke-width="1.2"><path d="M1134.5 258 V262 M1127 262 H1142 M1128 262 L1126 268 M1128 262 L1130 268 M1141 262 L1139 268 M1141 262 L1143 268"/></g>
 <path d="M1125.5 268 Q1128 272.5 1131 268Z M1138 268 Q1141 272.5 1144 268Z" fill="#d8d8d8"/><path d="M1132 259 H1137 L1134.5 262Z" fill="#e0e0e0"/>
 <rect x="1151" y="258.5" width="16" height="13" fill="#d8d8d8" stroke="#dcdcdc" stroke-width="1"/><rect x="1152" y="259.5" width="7" height="11" fill="#444"/>
 <rect x="1174" y="259" width="12" height="9" fill="#cfcfcf"/><circle cx="1178" cy="263" r="2.3" fill="#444"/><circle cx="1186" cy="268" r="4.5" fill="#8a8a8a" stroke="#e0e0e0" stroke-width="1.2"/>
 <circle cx="1206.5" cy="262" r="3.8" fill="#cfcfcf"/><circle cx="1202.5" cy="268" r="3.8" fill="#cfcfcf"/><circle cx="1210.5" cy="268" r="3.8" fill="#cfcfcf"/><path d="M1204 264 H1209 L1206.5 268Z" fill="#333"/>
 <rect x="1223.5" y="258.5" width="15.5" height="13" fill="#cfcfcf" stroke="#dcdcdc" stroke-width="1"/>
 <g fill="#555"><rect x="1228" y="260" width="4" height="3"/><rect x="1233" y="260" width="4" height="3"/><rect x="1225" y="264" width="2" height="3" fill="#888"/><rect x="1228" y="264" width="4" height="3"/><rect x="1233" y="264" width="4" height="3"/><rect x="1225" y="268" width="2" height="2.5"/><rect x="1228" y="268" width="4" height="2.5"/><rect x="1233" y="268" width="4" height="2.5"/></g>
 <!-- row 3 -->
 <rect x="1115.5" y="286" width="15.5" height="12.5" fill="#d2d2d2" stroke="#dcdcdc" stroke-width="1"/><path d="M1116 298 L1131 286.5" stroke="#333" stroke-width="1.5"/><ellipse cx="1123" cy="292" rx="3.5" ry="2.5" fill="#444" transform="rotate(-35 1123 292)"/>
 <rect x="1139.5" y="286" width="15.5" height="12.5" fill="url(#ag2)" stroke="#dcdcdc" stroke-width="1"/>
 <rect x="1163.5" y="286" width="15.5" height="12.5" fill="#d8d8d8" stroke="#dcdcdc" stroke-width="1"/><path d="M1164 296 L1168 293 L1171 292 L1175 289 L1178 288 V290 L1175 292 L1172 294 L1168 295 L1164 298Z" fill="#3a3a3a"/>
 <rect x="1187.5" y="286" width="15.5" height="12.5" fill="#cfcfcf" stroke="#dcdcdc" stroke-width="1"/><path d="M1188 286.5 L1195.25 292.25 L1188 298Z M1202.5 286.5 L1195.25 292.25 L1202.5 298Z" fill="#707070"/>
 <rect x="1211.5" y="286" width="15.5" height="12.5" fill="url(#ag1)" stroke="#dcdcdc" stroke-width="1"/>
 <g fill="#2a2a2a"><rect x="1163" y="231" width="17" height="1"/><rect x="1187" y="231" width="17" height="1"/><rect x="1102" y="257.5" width="17" height="1"/><rect x="1150" y="257.5" width="17" height="1"/><rect x="1223" y="257.5" width="16" height="1"/><rect x="1115" y="285" width="16" height="1"/><rect x="1139" y="285" width="16" height="1"/><rect x="1163" y="285" width="16" height="1"/><rect x="1187" y="285" width="16" height="1"/><rect x="1211" y="285" width="16" height="1"/></g>
</svg>
<!-- footer icons -->
<svg class="a" style="left:1230px;top:748px" width="115" height="18" viewBox="1230 748 115 18">
 <rect x="1236.5" y="752.5" width="10" height="9.5" rx="2" fill="none" stroke="#e8e8e8" stroke-width="1.2" stroke-dasharray="2.5 2"/>
 <rect x="1264" y="752.5" width="13" height="10" fill="#d8d8d8"/><rect x="1264" y="752" width="13" height="1" fill="#222"/><circle cx="1270.5" cy="758" r="2.5" fill="#3c3c3c"/>
 <rect x="1297" y="752.5" width="10" height="10" fill="#dcdcdc"/><rect x="1297" y="752" width="10" height="1" fill="#222"/><path d="M1297 758 H1301 V762.5 H1297Z" fill="#4e4e4e"/><path d="M1297.5 759 L1300.5 762" stroke="#222" stroke-width="1"/>
 <rect x="1325" y="754" width="11.5" height="1.6" fill="#e0e0e0"/><rect x="1328.5" y="752" width="4.5" height="2.5" fill="none" stroke="#e0e0e0" stroke-width="1"/><path d="M1326.5 756.5 H1335 V763 H1326.5Z" fill="none" stroke="#e0e0e0" stroke-width="1"/><path d="M1328.8 757 V762.5 M1330.8 757 V762.5 M1332.8 757 V762.5" stroke="#e0e0e0" stroke-width="1"/>
</svg>
<!-- status bar -->
<div class="a" style="left:89px;top:751px;width:202px;height:15px;background:#4c4c4c"></div><div class="a" style="left:291px;top:751px;width:1px;height:15px;background:#2c2c2c"></div>
<div class="a" style="left:40px;top:751px;width:49px;height:15px;background:#3b3b3b"></div>
<div class="t" style="left:46px;top:753px;font-size:10px;line-height:12px;color:#eaeaea">144,06%</div>
<svg class="a" style="left:90px;top:750px" width="20" height="16" viewBox="90 750 20 16"><path d="M94.5 755 V763.5 H103.5 V761" fill="none" stroke="#d8d8d8" stroke-width="1.2"/><path d="M97 761 Q98 756 103 756 V753.5 L107 757.5 L103 761 V758.5 Q99 758.5 97 761Z" fill="#d8d8d8"/></svg>
<div class="t" style="left:150px;top:753px;font-size:10px;line-height:12px;color:#eaeaea">Doc: 452,0K/602,7K</div>
<svg class="a" style="left:280px;top:752px" width="10" height="14" viewBox="280 752 10 14"><path d="M282 754 L288.5 759 L282 764Z" fill="#e8e8e8"/></svg>

<!-- menu bar texts -->
<div class="mi" style="left:47px">File</div>
<div class="mi" style="left:81px">Edit</div>
<div class="mi" style="left:118px">Image</div>
<div class="mi" style="left:168px">Layer</div>
<div class="a" style="left:249px;top:3px;width:49px;height:19px;background:#3a3a3a"></div>
<div class="mi" style="left:214px">Type</div>
<div class="mi" style="left:256px">Select</div>
<div class="mi" style="left:305px">Filter</div>
<div class="mi" style="left:348px">3D</div>
<div class="mi" style="left:381px">View</div>
<div class="mi" style="left:425px">Window</div>
<div class="mi" style="left:484px">Help</div>

<!-- document -->
<div id="doc" class="a">
  <div class="bar" style="left:18px;width:76px;background:#000"></div>
  <div class="bar" style="left:99px;width:80px;background:#0b0b0b"></div>
  <div class="bar" style="left:182px;width:80px;background:#242424"></div>
  <div class="bar" style="left:265px;width:80px;background:#3c3c3c"></div>
  <div class="bar" style="left:348px;width:80px;background:#5a5a5a"></div>
  <div class="bar" style="left:430px;width:86px;background:#808080"></div>
  <div class="bar" style="left:516px;width:82px;background:#a3a3a3"></div>
  <div class="bar ants" style="left:600px;width:81px;background-color:#bebebe"></div>
  <div class="bar ants" style="left:683px;width:82px;background-color:#d3d3d3"></div>
  <div class="bar ants" style="left:768px;width:82px;background-color:#efefef"></div>
  <div class="bar ants" style="left:853px;width:82px;background-color:#ffffff"></div>
  <div class="num" style="left:71px;top:263px">0</div>
  <div class="num" style="left:153px;top:263px">I</div>
  <div class="num" style="left:235px;top:263px">II</div>
  <div class="num" style="left:319px;top:263px">III</div>
  <div class="num" style="left:401px;top:263px">IV</div>
  <div class="num" style="left:483px;top:263px">V</div>
  <div class="num" style="left:565px;top:263px">VI</div>
  <div class="num" style="left:646px;top:263px">VII</div>
  <div class="num" style="left:730px;top:263px">VIII</div>
  <div class="num" style="left:813px;top:263px">IX</div>
  <div class="num" style="left:894px;top:263px">X</div>
</div>

<!-- dropdown menu -->
<div id="menu" class="a">
  <div class="r" style="top:2px"><span class="l">All</span><span class="k">Ctrl+A</span></div>
  <div class="r" style="top:21px"><span class="l">Deselect</span><span class="k">Ctrl+D</span></div>
  <div class="r d" style="top:40px"><span class="l">Reselect</span><span class="k">Shift+Ctrl+D</span></div>
  <div class="r h" style="top:59px"><span class="l">Inverse</span><span class="k">Shift+Ctrl+I</span></div>
  <div class="sp" style="top:81px"></div>
  <div class="r d" style="top:87px"><span class="l">All Layers</span><span class="k">Alt+Ctrl+A</span></div>
  <div class="r d" style="top:106px"><span class="l">Deselect Layers</span></div>
  <div class="r d" style="top:125px"><span class="l">Find Layers</span><span class="k">Alt+Shift+Ctrl+F</span></div>
  <div class="r d" style="top:144px"><span class="l">Isolate Layers</span></div>
  <div class="sp" style="top:166px"></div>
  <div class="r" style="top:172px"><span class="l">Color Range...</span></div>
  <div class="r" style="top:191px"><span class="l">Focus Area...</span></div>
  <div class="sp" style="top:213px"></div>
  <div class="r" style="top:219px"><span class="l">Refine Edge...</span><span class="k">Alt+Ctrl+R</span></div>
  <div class="r" style="top:238px"><span class="l">Modify</span><svg style="position:absolute;left:206px;top:4px" width="6" height="10" viewBox="0 0 6 10"><path d="M1 0.5 L5.5 4.5 L1 8.5Z" fill="#000"/></svg></div>
  <div class="sp" style="top:260px"></div>
  <div class="r" style="top:266px"><span class="l">Grow</span></div>
  <div class="r" style="top:285px"><span class="l">Similar</span></div>
  <div class="sp" style="top:307px"></div>
  <div class="r" style="top:313px"><span class="l">Transform Selection</span></div>
  <div class="sp" style="top:335px"></div>
  <div class="r" style="top:341px"><span class="l">Edit in Quick Mask Mode</span></div>
  <div class="sp" style="top:363px"></div>
  <div class="r" style="top:369px"><span class="l">Load Selection...</span></div>
  <div class="r" style="top:388px"><span class="l">Save Selection...</span></div>
  <div class="sp" style="top:410px"></div>
  <div class="r" style="top:416px"><span class="l">New 3D Extrusion</span></div>
</div>
</body></html>
